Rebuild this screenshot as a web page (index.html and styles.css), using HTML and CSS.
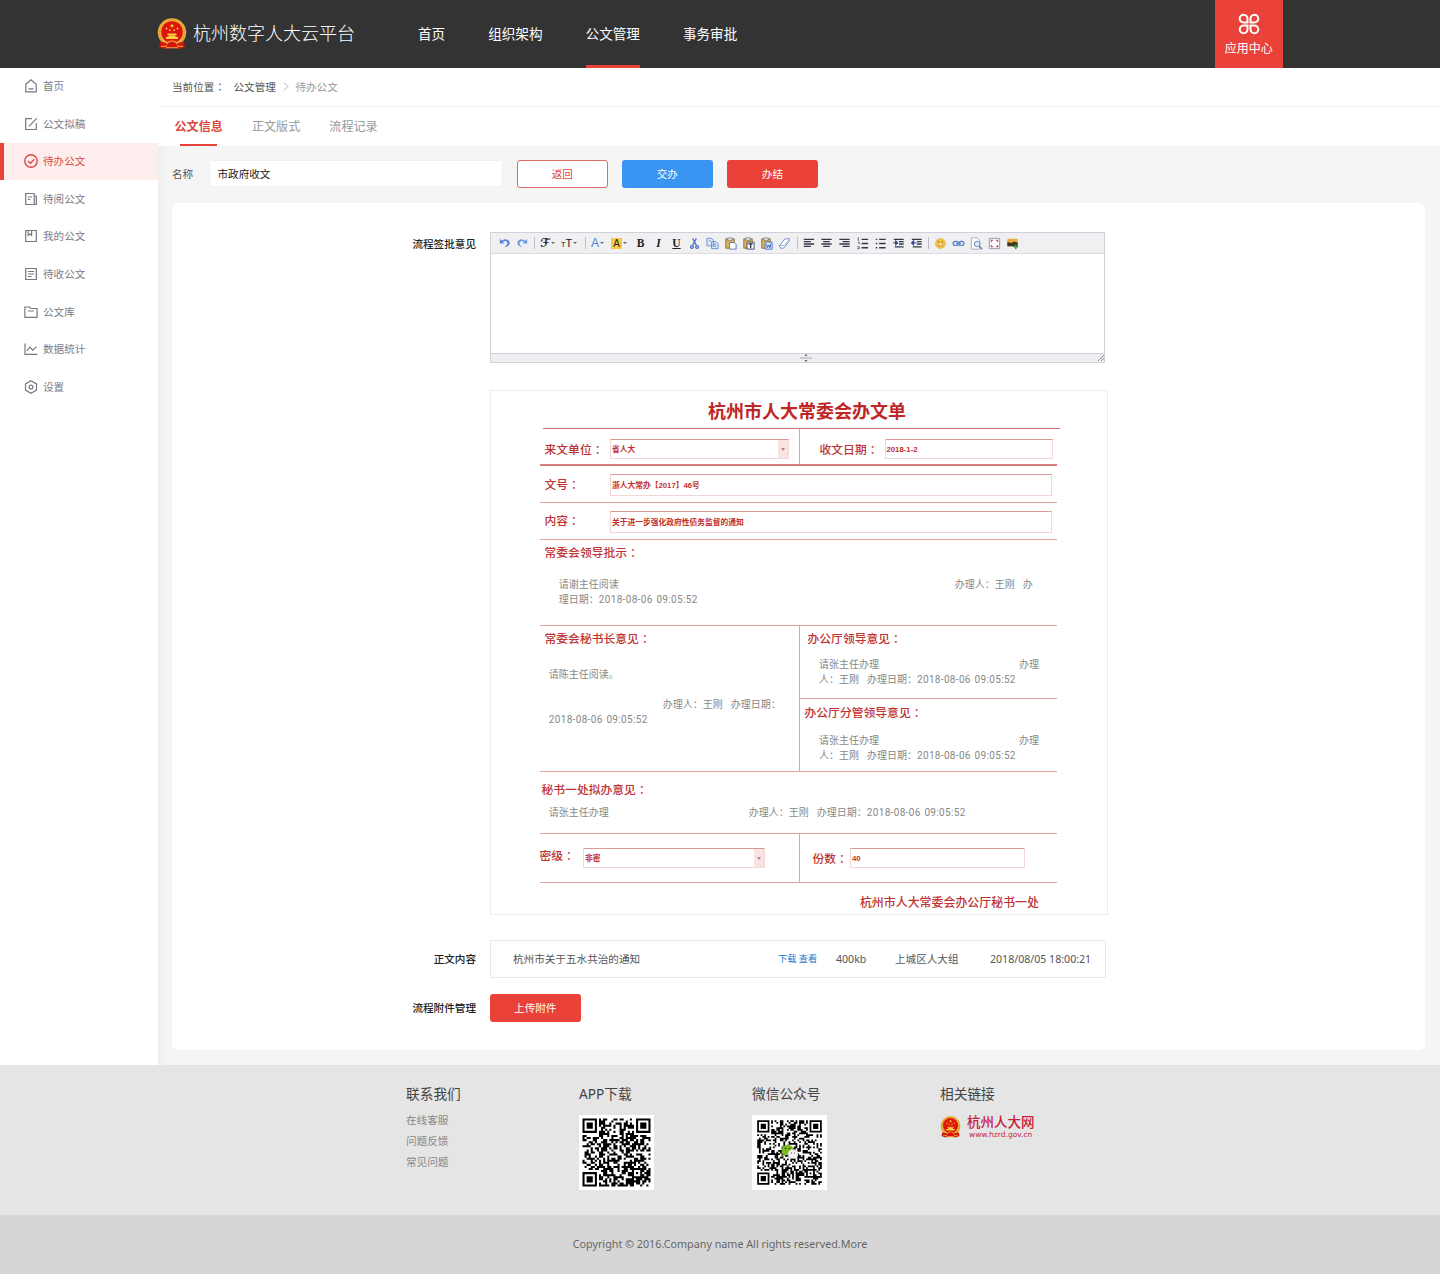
FILE: index.html
```html
<!DOCTYPE html>
<html>
<head>
<meta charset="utf-8">
<title>杭州数字人大云平台</title>
<link rel="stylesheet" href="styles.css">
</head>
<body>
<svg class="defs" aria-hidden="true">
  <symbol id="emblem" viewBox="0 0 30 32">
    <circle cx="15" cy="14.5" r="14.2" fill="#eeb03a"/>
    <circle cx="15" cy="14.5" r="12.6" fill="none" stroke="#c98322" stroke-width=".8" stroke-dasharray="1.2 1"/>
    <circle cx="15" cy="14" r="10.8" fill="#dd1410"/>
    <path d="M15 5.500l.6 1.400 1.500.1-1.100 1 .3 1.500-1.300-.8-1.300.8.3-1.500-1.100-1 1.500-.1z" fill="#f8cf3e"/>
    <g fill="#f8cf3e"><circle cx="9.500" cy="10.500" r=".9"/><circle cx="12.800" cy="12.200" r=".9"/><circle cx="17.200" cy="12.200" r=".9"/><circle cx="20.500" cy="10.500" r=".9"/><path d="M11 15.500h8l1 1.500H10zM11.500 17.300h7v1.500h2.500v2.200H9v-2.200h2.500z"/></g>
    <path d="M3.500 23q5 3.500 11.500 1 6.500 2.500 11.500-1l1.500 6-6 2-7-1.500L8 31l-6-2z" fill="#d3150f"/>
    <path d="M10 26.500a5 3.500 0 0 1 10 0M4 28.500l6-.5M20 28l6 .5M9 29.800h12" fill="none" stroke="#efac32" stroke-width="1.100"/>
  </symbol>
  <symbol id="clip" viewBox="0 0 16 16">
    <path d="M3 3h9v10H3z" fill="#d9b45f" stroke="#8b7438"/><path d="M5 2h5v2.500H5z" fill="#eee" stroke="#777" stroke-width=".8"/>
  </symbol>
</svg>

<header class="top">
  <svg class="top-emblem"><use href="#emblem"/></svg>
  <h1 class="brand">杭州数字人大云平台</h1>
  <nav class="nav">
    <a>首页</a><a>组织架构</a><a class="on">公文管理</a><a>事务审批</a>
  </nav>
  <a class="apps">
    <svg width="22" height="22" viewBox="0 0 22 22" fill="none" stroke="#fff" stroke-width="2">
      <path d="M9.500 9.500H5.700a3.900 3.900 0 1 1 3.800-3.800zM12.500 9.500V5.700a3.900 3.900 0 1 1 3.800 3.800zM9.500 12.500v3.800a3.900 3.900 0 1 1-3.800-3.800zM12.500 12.500h3.800a3.900 3.900 0 1 1-3.800 3.800z"/>
    </svg>
    <span>应用中心</span>
  </a>
</header>

<div class="body">
  <aside class="side">
    <a><svg viewBox="0 0 14 14"><path d="M1.800 5.300L7 .9l5.200 4.400v7.500H1.800zM4.500 9.800h5"/></svg>首页</a>
    <a><svg viewBox="0 0 14 14"><path d="M8 1.700H1.700v10.800h10.600V6M5 9.300L12.700 1.300"/></svg>公文拟稿</a>
    <a class="on"><svg viewBox="0 0 14 14"><circle cx="7" cy="7" r="6.200"/><path d="M4 7l2.300 2.200 4-4"/></svg>待办公文</a>
    <a><svg viewBox="0 0 14 14"><path d="M1.700 1.500h8.500v11H1.700zM10.200 4h2.100v8.500h-2.100M3.800 5h4.200M3.800 7.500h2.600"/></svg>待阅公文</a>
    <a><svg viewBox="0 0 14 14"><path d="M1.700 1.500h10.600v11H1.700zM4.200 1.500v4.800l1.700-1.300 1.700 1.300V1.500"/></svg>我的公文</a>
    <a><svg viewBox="0 0 14 14"><path d="M1.700 1.500h10.600v11H1.700zM3.900 4.500h6.200M3.900 7h6.200M3.900 9.500h3.600"/></svg>待收公文</a>
    <a><svg viewBox="0 0 14 14"><path d="M.9 2h4.500l1.300 1.500h6.400v8.800H.9zM4 6h6"/></svg>公文库</a>
    <a><svg viewBox="0 0 14 14"><path d="M1 1.500v10.800h12.300M2.800 9l3-3.800 3 3 3.700-3.600"/></svg>数据统计</a>
    <a><svg viewBox="0 0 14 14"><path d="M7 .8l5.500 3.100v6.200L7 13.200l-5.500-3.100V3.900z"/><circle cx="7" cy="7" r="1.900"/></svg>设置</a>
  </aside>

  <main class="main">
    <div class="crumbs"><span class="where">当前位置<i class="colon">：</i></span><span>公文管理</span><svg width="6" height="9" viewBox="0 0 6 9"><path d="M1 .7l3.800 3.800L1 8.300" fill="none" stroke="#aaa"/></svg><span class="dim">待办公文</span></div>
    <div class="tabs"><a class="on">公文信息</a><a>正文版式</a><a>流程记录</a></div>

    <div class="filter">
      <label>名称</label>
      <div class="name-input">市政府收文</div>
      <a class="btn btn-line">返回</a>
      <a class="btn btn-blue">交办</a>
      <a class="btn btn-red">办结</a>
    </div>

    <section class="card">
      <div class="field">
        <div class="label label-top">流程签批意见</div>
        <div class="editor">
          <div class="toolbar">
            <svg viewBox="0 0 16 16"><path d="M3 3v5h5L6.300 6.300Q9.500 4 11 7q.6 3-3 5 6-1 5.500-5.500Q11.500 1.500 5 5z" fill="#5b83d6"/></svg>
            <svg viewBox="0 0 16 16"><path d="M13 3v5H8l1.700-1.700Q6.500 4 5 7q-.6 3 3 5-6-1-5.500-5.500Q4.500 1.500 11 5z" fill="#6e9be6"/></svg>
            <i class="sep"></i>
            <span class="tool script">ℱ<b class="caret"></b></span>
            <span class="tool size"><small>T</small>T<b class="caret"></b></span>
            <i class="sep sep-b"></i>
            <span class="tool fore">A<b class="caret"></b></span>
            <span class="tool back"><em>A</em><b class="caret"></b></span>
            <span class="tool serif">B</span><span class="tool serif ital">I</span><span class="tool serif under">U</span>
            <svg viewBox="0 0 16 16" fill="none" stroke="#4470c8" stroke-width="1.300"><path d="M6 2.500l4 7.500M10 2.500L6 10"/><circle cx="5.300" cy="11.700" r="1.500"/><circle cx="10.700" cy="11.700" r="1.500"/></svg>
            <svg viewBox="0 0 16 16" fill="#dce8fa" stroke="#6c93d0"><path d="M2 2.500h5l2 2v6H2zM7 6h5l2 2v5.500H7z"/><path d="M9 9h3M9 11h3M4 5h2"/></svg>
            <svg viewBox="0 0 16 16"><use href="#clip"/><path d="M7 7h5l2 2v5H7z" fill="#fff" stroke="#557ab5"/></svg>
            <svg viewBox="0 0 16 16"><use href="#clip"/><path d="M6.500 6.500h7.500v7.500H6.500z" fill="#fff" stroke="#3b4c75"/><path d="M8 8.500h4.500M10.300 8.500V13" stroke="#223" stroke-width="1.300"/></svg>
            <svg viewBox="0 0 16 16"><use href="#clip"/><path d="M6.500 6.500h7.500v7.500H6.500z" fill="#dce9ff" stroke="#4a78c6"/><path d="M8 8.500l1 4 1.300-3 1.300 3 1-4" stroke="#2f5fb5" fill="none"/></svg>
            <svg viewBox="0 0 16 16"><path d="M2.500 10.500L8.500 3h5l-1 3-5.500 7H4z" fill="#fff" stroke="#7189bd"/><path d="M3 10h4.500L13 4" fill="none" stroke="#9bb0d8"/></svg>
            <i class="sep sep-c"></i>
            <svg class="bars" viewBox="0 0 16 16"><path d="M3 3.500h11M3 6h7.500M3 8.500h11M3 11h7.500"/></svg>
            <svg class="bars" viewBox="0 0 16 16"><path d="M2.500 3.500h11M4.500 6h7M2.500 8.500h11M4.500 11h7"/></svg>
            <svg class="bars" viewBox="0 0 16 16"><path d="M2.500 3.500h11M6 6h7.500M2.500 8.500h11M6 11h7.500"/></svg>
            <svg class="bars" viewBox="0 0 16 16"><path d="M7 3.500h7M7 8h7M7 12.500h7"/><path class="fine" d="M3.500 1.500v4M3 7h1.500v2M2.500 11.500h2v2h-2"/></svg>
            <svg class="bars" viewBox="0 0 16 16"><path d="M6.500 3.500h7M6.500 8h7M6.500 12.500h7M3 3.500h1.500M3 8h1.500M3 12.500h1.500"/></svg>
            <svg class="bars" viewBox="0 0 16 16"><path d="M3 3.500h10.500M8.500 6h5M8.500 8.500h5M4 11.500h9.500"/><path d="M2 7.300h3.500M4.800 4.800L7.500 7.300 4.800 9.800z" stroke="#2e4d92" fill="#2e4d92" stroke-width="1"/></svg>
            <svg class="bars" viewBox="0 0 16 16"><path d="M3 3.500h10.500M8.500 6h5M8.500 8.500h5M4 11.500h9.500"/><path d="M4 7.300h4M5 4.800L2.300 7.300 5 9.800z" stroke="#2e4d92" fill="#2e4d92" stroke-width="1"/></svg>
            <i class="sep sep-d"></i>
            <svg viewBox="0 0 16 16"><circle cx="8" cy="8" r="5.300" fill="#f6c545" stroke="#dc9f37" stroke-width=".6"/><path d="M4.800 8.800q3.200 4 6.400 0" fill="#fff4cf" stroke="#a76417" stroke-width=".8"/><path d="M6 5.500v1.400M10 5.500v1.400" stroke="#7d4c12"/></svg>
            <svg viewBox="0 0 16 16" fill="none" stroke="#6288c7" stroke-width="1.500"><rect x="2.300" y="5.800" width="5.500" height="4.200" rx="2"/><rect x="8.200" y="5.800" width="5.500" height="4.200" rx="2"/><path d="M5.500 8h5"/></svg>
            <svg viewBox="0 0 16 16"><path d="M2.500 2h6l3 3v9h-9z" fill="#fff" stroke="#9aafd2"/><circle cx="8.700" cy="8.500" r="3" fill="#dbe9fa" stroke="#6686b8"/><path d="M11 11l3 3" stroke="#6686b8" stroke-width="1.700"/></svg>
            <svg viewBox="0 0 16 16"><path d="M2.500 2.500h11v11h-11z" fill="#fff" stroke="#9c94aa"/><path d="M4 4h3L4 7zM12 4H9l3 3zM4 12h3L4 9zM12 12H9l3-3z" fill="#bd4664"/></svg>
            <svg viewBox="0 0 16 16"><path d="M2.500 3h11v8h-11z" fill="#e9a73c"/><path d="M2.500 6.500l4 1 3-1.500 4 1V11h-11z" fill="#42331f"/><path d="M11.500 9v5M9 11.500h5" stroke="#3d9d47" stroke-width="1.700"/></svg>
          </div>
          <div class="canvas"></div>
          <div class="grip">
            <svg width="12" height="8" viewBox="0 0 12 8"><path d="M0 4h12" stroke="#a9adba"/><path d="M6 0l1.500 2h-3zM6 8l1.500-2h-3z" fill="#5b6278"/></svg>
            <svg class="corner" width="7" height="7" viewBox="0 0 7 7"><path d="M1 7l6-6M4 7l3-3" stroke="#8a8e9a"/></svg>
          </div>
        </div>
      </div>

      <div class="sheet">
        <h2>杭州市人大常委会办文单</h2>
        <div class="rule"></div>
        <div class="r r1">
          <div class="cell"><span class="key">来文单位<i class="colon">：</i></span><div class="box sel">省人大<u></u></div></div>
          <div class="cell right"><span class="key">收文日期<i class="colon">：</i></span><div class="box">2018-1-2</div></div>
        </div>
        <div class="r r2"><span class="key">文号<i class="colon">：</i></span><div class="box long">浙人大常办【2017】46号</div></div>
        <div class="r r2 r3"><span class="key">内容<i class="colon">：</i></span><div class="box long">关于进一步强化政府性债务监督的通知</div></div>
        <div class="r r4">
          <h3>常委会领导批示<i class="colon">：</i></h3>
          <div class="note"><p class="split"><span>请谢主任阅读</span><span>办理人：<b>王刚</b><b>办</b></span></p><p>理日期：<time>2018-08-06 09:05:52</time></p></div>
        </div>
        <div class="r r5">
          <div class="cell tall">
            <h3>常委会秘书长意见<i class="colon">：</i></h3>
            <div class="note"><p>请陈主任阅读。</p><p class="signed">办理人：<b>王刚</b><b>办理日期：</b></p><p><time>2018-08-06 09:05:52</time></p></div>
          </div>
          <div class="stack">
            <div class="office">
              <h3>办公厅领导意见<i class="colon">：</i></h3>
              <div class="note"><p class="split"><span>请张主任办理</span><span>办理</span></p><p>人：<b>王刚</b><b>办理日期：</b><time>2018-08-06 09:05:52</time></p></div>
            </div>
            <div class="office second">
              <h3>办公厅分管领导意见<i class="colon">：</i></h3>
              <div class="note"><p class="split"><span>请张主任办理</span><span>办理</span></p><p>人：<b>王刚</b><b>办理日期：</b><time>2018-08-06 09:05:52</time></p></div>
            </div>
          </div>
        </div>
        <div class="r r6">
          <h3>秘书一处拟办意见<i class="colon">：</i></h3>
          <div class="note"><p><span class="who">请张主任办理</span>办理人：<b>王刚</b><b>办理日期：</b><time>2018-08-06 09:05:52</time></p></div>
        </div>
        <div class="r r7">
          <div class="cell"><span class="key">密级<i class="colon">：</i></span><div class="box sel">非密<u></u></div></div>
          <div class="cell right"><span class="key">份数<i class="colon">：</i></span><div class="box">40</div></div>
        </div>
        <div class="sign">杭州市人大常委会办公厅秘书一处</div>
      </div>

      <div class="field doc-field">
        <div class="label">正文内容</div>
        <div class="doc"><span class="doc-name">杭州市关于五水共治的通知</span><span class="doc-act">下载 查看</span><span class="doc-size">400kb</span><span class="doc-org">上城区人大组</span><span class="doc-date">2018/08/05 18:00:21</span></div>
      </div>
      <div class="field up-field">
        <div class="label">流程附件管理</div>
        <a class="btn btn-red">上传附件</a>
      </div>
    </section>
  </main>
</div>

<footer>
  <div class="links">
    <div class="col"><h4>联系我们</h4><a>在线客服</a><a>问题反馈</a><a>常见问题</a></div>
    <div class="col"><h4>APP下载</h4><svg class="qr" data-size="33" data-seed="7" data-pad="3.5" viewBox="0 0 75 75"></svg></div>
    <div class="col wide-col"><h4>微信公众号</h4><svg class="qr" data-size="37" data-seed="23" data-pad="5.2" data-chat="1" viewBox="0 0 75 75"></svg></div>
    <div class="col"><h4>相关链接</h4>
      <div class="site"><svg viewBox="0 0 30 32"><use href="#emblem"/></svg><div><strong>杭州人大网</strong><small>www.hzrd.gov.cn</small></div></div>
    </div>
  </div>
  <div class="copy">Copyright © 2016.Company name All rights reserved.More</div>
</footer>
<script src="qr.js"></script>
</body>
</html>
```
FILE: styles.css
```css
* { box-sizing: border-box; margin: 0; padding: 0; }
body { width: 1440px; font: 10.6px/16px "Noto Sans", "Noto Sans CJK SC", sans-serif; color: #555; background: #fff; }
i, em { font-style: normal; }
svg { flex: none; display: block; }
.defs { position: absolute; width: 0; height: 0; }
.colon { font-family: "Noto Sans CJK TC", sans-serif; font-weight: 400; }

.top { display: flex; height: 67.5px; padding-left: 157px; background: #333; color: #fff; }
.top-emblem { width: 30px; height: 32px; margin-top: 18px; }
.brand { width: 230px; padding-left: 6px; font-size: 18px; font-weight: 300; line-height: 67px; }
.nav { display: flex; gap: 43px; margin-left: 1px; font-size: 13.6px; line-height: 68px; }
.nav a { height: 67.5px; }
.nav .on { border-bottom: 3px solid #ea4239; }
.apps { display: flex; flex-direction: column; align-items: center; width: 67.5px; margin: 0 157.5px 0 auto; padding-top: 13px; background: #ea4239; font-size: 12px; }
.apps span { margin-top: 6px; }

.body { display: flex; height: 997.5px; }
.side { width: 157.5px; background: #fff; }
.side a { display: flex; align-items: center; height: 37.6px; padding: 0 0 .4px 24px; gap: 5px; color: #7c7c89; }
.side svg { width: 14px; height: 14px; fill: none; stroke: #777785; stroke-width: 1.2; }
.side .on { padding-left: 20px; border-left: 4px solid #ea4239; background: #fdeeed; color: #df4a44; }
.side .on svg { stroke: #df4a44; stroke-width: 1.4; }

.main { width: 1282.5px; background: linear-gradient(90deg, #efefef, #f5f5f5 10px); }
.crumbs { display: flex; align-items: center; height: 39px; padding-left: 14.5px; border-bottom: 1px solid #f1f1f1; background: #fff; }
.crumbs .where { width: 61.5px; }
.crumbs svg { margin: 0 6.500px 0 7px; }
.crumbs .dim { color: #999; }
.tabs { display: flex; gap: 29px; height: 39.5px; padding-left: 17px; background: #fff; font-size: 12.1px; line-height: 39px; color: #999; }
.tabs .on { display: flex; flex-direction: column; align-items: center; font-weight: 700; color: #dc4640; }
.tabs .on::after { content: ""; width: 37px; height: 2px; margin-top: -2px; background: #ea4239; }

.filter { display: flex; height: 57px; padding: 14px 0 0 14.5px; line-height: 28px; }
.filter label { width: 36.500px; }
.name-input { width: 294px; height: 27px; margin-right: 14.500px; padding-left: 8px; border: 1px solid #efefef; border-radius: 3px; background: #fff; line-height: 26px; color: #222; }
.btn { width: 90.500px; height: 27.500px; border-radius: 3px; text-align: center; line-height: 28px; color: #fff; }
.filter .btn { margin-right: 14.600px; }
.filter .btn-line { border: 1px solid #df6a65; background: #fff; line-height: 26px; color: #db4640; }
.btn-blue { background: #3994f2; }
.btn-red { background: #ea4239; }

.card { width: 1253px; height: 847px; margin-left: 14.5px; padding-top: 29px; border-radius: 6px; background: #fff; }
.field { display: flex; }
.label { width: 304px; margin-right: 14px; text-align: right; font-weight: 500; font-family: "Noto Sans CJK SC", sans-serif; color: #222; }
.label-top { padding-top: 4px; }

.editor { width: 615px; height: 130.500px; border: 1px solid #cfd0d8; }
.toolbar { display: flex; align-items: center; height: 20.500px; padding: 1px 0 0 4px; border-bottom: 1px solid #dcdce2; background: #f0f0f3; }
.toolbar svg { width: 15px; height: 15px; margin: 0 1.500px; }
.sep { width: 1px; height: 12px; margin: 0 4px 0 2.500px; background: #b9bdc8; }
.sep-b, .sep-c, .sep-d { margin: 0 3px; }
.sep-c { margin-right: 2px; }
.sep-d { margin: 0 2.500px; }
.tool { display: flex; justify-content: center; align-items: center; width: 18px; height: 18px; color: #222; }
.script { font: 700 12px "DejaVu Sans", sans-serif; }
.size { width: 25px; font: 11px "Liberation Sans", sans-serif; }
.size small { font-size: 8px; padding-top: 2px; }
.fore { font: 12px "Liberation Sans", sans-serif; color: #4b83e0; }
.back { width: 25px; font: 10px "Liberation Sans", sans-serif; }
.back em { width: 11px; height: 11px; background: #fac942; text-align: center; line-height: 11px; }
.caret { margin-left: 1px; border: 2px solid transparent; border-top-color: #666; border-bottom: 0; }
.serif { font: 900 11.500px "Liberation Serif", serif; }
.ital { font-style: italic; }
.under { text-decoration: underline; }
.bars { fill: none; stroke: #343848; stroke-width: 1.400; }
.bars .fine { stroke-width: .8; }
.canvas { height: 99px; }
.grip { display: flex; justify-content: space-between; align-items: center; height: 9px; padding-left: 309px; border-top: 1px solid #cfd0d8; background: #efeff1; }

.sheet { width: 618px; height: 525px; margin: 27.500px 0 0 317.500px; padding-left: 49px; border: 1px solid #ececec; color: #c03333; }
.sheet h2 { height: 36.500px; margin-left: -49px; padding-left: 17px; text-align: center; font-size: 18px; line-height: 40px; color: #bf2626; }
.rule { width: 517px; height: 1.500px; margin-left: 3px; background: #cf7373; }
.r { width: 517px; border-bottom: 1px solid #e3a3a3; }
.key, .sheet h3 { font: 500 11.800px/16px "Noto Sans CJK SC", sans-serif; }
.sheet h3 { margin: -1px 0 1px; }
.key { flex: none; width: 65.500px; }
.box { flex: none; height: 20px; padding-left: 1px; border: 1px solid #f3d7d7; border-top-color: #dc9797; font: 700 7.750px/20px "Liberation Sans", "Noto Sans CJK SC", sans-serif; color: #c22f2f; }
.sel { display: flex; justify-content: space-between; }
.sel u { display: flex; justify-content: center; align-items: center; width: 10px; background: #f8e4e4; }
.sel u::after { content: ""; border: 2.500px solid transparent; border-top: 3px solid #c58080; border-bottom: 0; }
.cell { display: flex; width: 259px; }
.right { width: 258px; border-left: 1px solid #e3a3a3; }
.r1 { display: flex; height: 37px; border-bottom: 2px solid #d37d7d; }
.r1 .cell { padding: 10px 0 0 5px; }
.r1 .key { padding-top: 1.500px; }
.r1 .sel { width: 179px; }
.r1 .right { padding-left: 20px; }
.r1 .right .key { width: 65px; }
.r1 .right .box { width: 168px; }
.r2 { display: flex; height: 37px; padding: 8px 0 0 5px; }
.r2 .key { padding-top: 2px; }
.long { width: 442px; height: 22px; line-height: 21px; }
.r3 .key { padding-top: 1px; }
.r4 { height: 86px; padding: 5px 0 0 5px; }
.note { padding-top: 1px; font: 10px/15px Roboto, "Noto Sans CJK SC", sans-serif; color: #888; }
.note b { margin-right: 8px; font-weight: 400; }
.note b:last-child, .note b:has(+ time) { margin-right: 0; }
.note time { letter-spacing: .33px; word-spacing: 1px; }
.split { display: flex; justify-content: space-between; }
.r4 .note { width: 474px; margin: 16px 0 0 14.300px; }
.r5 { display: flex; height: 146px; }
.tall { display: block; padding: 5px 0 0 5px; }
.tall .note { margin: 19.500px 0 0 4.300px; }
.signed { margin-top: 15px; padding-left: 114px; }
.stack { width: 258px; border-left: 1px solid #e3a3a3; }
.office { height: 73px; padding: 5px 0 0 8px; border-bottom: 1px solid #e3a3a3; }
.office .note { width: 220px; margin: 9.500px 0 0 11.500px; }
.second { padding: 6px 0 0 5px; border: 0; }
.second .note { margin: 12px 0 0 14.500px; }
.r6 { height: 61.500px; padding: 9.500px 0 0 2px; }
.r6 .note { margin: 7.500px 0 0 7.300px; }
.who { display: inline-block; width: 200px; }
.r7 { display: flex; height: 49.500px; }
.r7 .cell { padding-top: 14.500px; }
.r7 .key { width: 43.500px; margin-top: -1px; }
.r7 .sel { width: 182px; }
.r7 .right { padding-left: 13px; }
.r7 .right .key { width: 37.500px; margin-top: 0; padding-top: 2px; }
.r7 .right .box { width: 175px; }
.sign { width: 499.500px; margin-top: 11px; text-align: right; font: 500 11.950px/16px "Noto Sans CJK SC", sans-serif; }

.doc-field { margin-top: 25px; line-height: 37px; }
.doc { display: flex; width: 616px; height: 38px; padding-left: 22px; border: 1px solid #e9e9e9; border-radius: 2px; line-height: 36px; white-space: nowrap; }
.doc-name { width: 265px; }
.doc-act { width: 58px; font-size: 9.200px; color: #2277cc; }
.doc-size { width: 59px; }
.doc-org { width: 95px; }
.up-field { margin-top: 16px; line-height: 27px; }

footer { height: 209px; background: #e5e5e5; }
.links { display: flex; height: 150px; padding: 20px 0 0 406px; }
.col { width: 173px; color: #888; }
.wide-col { width: 188px; }
.col h4 { height: 30px; font-size: 13.700px; font-weight: 400; line-height: 18px; color: #444; }
.col a { display: block; height: 21px; line-height: 10px; }
.qr { width: 75px; height: 75px; background: #fff; }
.site { display: flex; align-items: center; gap: 6px; margin-top: -1px; }
.site svg { width: 21px; height: 24px; }
.site strong, .site small { display: block; color: #c51e3a; }
.site strong { font: 500 13.500px/15px "Noto Sans CJK SC", sans-serif; }
.site small { padding: 1px 0 0 2px; font: 7.500px/10px "DejaVu Sans", sans-serif; }
.copy { height: 59px; background: #d6d6d6; text-align: center; font-size: 10.750px; line-height: 58px; color: #666; }
```
FILE: qr.js
```js
// Fills each .qr element with finder patterns, alignment marks and data modules.
document.querySelectorAll('.qr').forEach(function (svg) {
  var n = +svg.dataset.size, seed = +svg.dataset.seed, pad = +svg.dataset.pad;
  var u = (75 - pad * 2) / n, d = '';
  function ring(x, y, size, r, c) {
    if (c < x || r < y || c >= x + size || r >= y + size) return null;
    var m = Math.min(c - x, r - y, x + size - 1 - c, y + size - 1 - r);
    return m !== 1;
  }
  for (var r = 0; r < n; r++) for (var c = 0; c < n; c++) {
    seed = (seed * 1103515 + 12345) % 2147483648;
    var on = (seed / 2147483648) > 0.49;
    if ((r < 8 && (c < 8 || c > n - 9)) || (r > n - 9 && c < 8)) on = false;
    [[0, 0, 7], [n - 7, 0, 7], [0, n - 7, 7], [n - 9, n - 9, 5]].forEach(function (f) {
      var v = ring(f[0], f[1], f[2], r, c);
      if (v !== null) on = v;
    });
    if (on) d += 'M' + (pad + c * u).toFixed(2) + ' ' + (pad + r * u).toFixed(2) + 'h' + u.toFixed(2) + 'v' + u.toFixed(2) + 'h-' + u.toFixed(2) + 'z';
  }
  var html = '<path d="' + d + '"/>';
  if (svg.dataset.chat) html += '<ellipse cx="35.500" cy="35" rx="6" ry="5.300" fill="#7dbb22"/><path d="M31 38l-1 4 4-2z" fill="#7dbb22"/><ellipse cx="41" cy="39" rx="5" ry="4.500" fill="#f4f4f4" stroke="#ccc" stroke-width=".5"/><g fill="#333"><circle cx="33.500" cy="33.500" r=".8"/><circle cx="37.500" cy="33.500" r=".8"/><circle cx="39.500" cy="38" r=".6"/><circle cx="42.500" cy="38" r=".6"/></g>';
  svg.innerHTML = html;
});
```
